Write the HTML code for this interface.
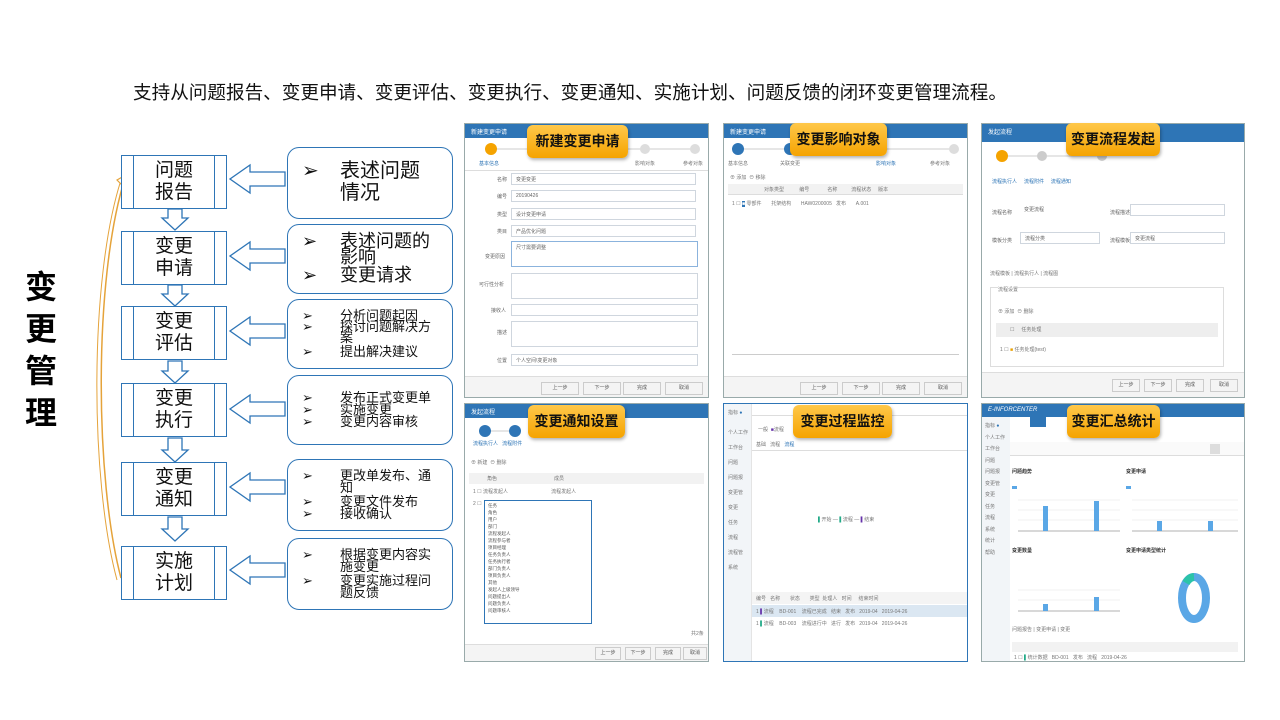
<!DOCTYPE html><html><head><meta charset="utf-8"><style>
*{margin:0;padding:0;box-sizing:border-box}
body{width:1280px;height:720px;background:#fff;position:relative;overflow:hidden;font-family:"Liberation Sans","Noto Sans CJK SC",sans-serif}
.a{position:absolute}
.title{left:133px;top:78px;font-size:18.6px;color:#111;white-space:nowrap}
.big{left:20px;top:266px;width:42px;font-size:32px;font-weight:bold;line-height:42px;text-align:center;color:#000}
.step{position:absolute;left:121px;width:106px;height:54px;border:1.5px solid #2e75b6;background:#fff;font-size:19px;line-height:22px;text-align:center;padding-top:4px;color:#111}
.step:before,.step:after{content:"";position:absolute;top:0;bottom:0;width:0;border-left:1.5px solid #2e75b6}
.step:before{left:11px}.step:after{right:11px}
.box{position:absolute;left:287px;width:166px;border:1.5px solid #2e75b6;border-radius:12px;background:#fff;color:#111}
.box .li{position:relative;padding-left:52px}
.box .li:before{content:"➢";position:absolute;left:14px;top:0}
.panel{position:absolute;border:1px solid #9aa;background:#fff;overflow:hidden}
.hd{height:14px;background:#2e75b6;color:#fff;font-size:6px;padding:3px 6px}
.lab{position:absolute;background:linear-gradient(#ffc84a,#f5a300);border-radius:6px;font-size:14px;font-weight:bold;color:#111;text-align:center;line-height:33px;height:33px;box-shadow:1px 2px 3px rgba(0,0,0,.3)}
.f{position:absolute;border:1px solid #cfd6de;height:12px;font-size:5px;color:#666;padding:2px 4px}
.fl{position:absolute;font-size:5px;color:#666}
.btn{position:absolute;border:1px solid #ccc;height:13px;width:38px;font-size:5px;color:#555;text-align:center;line-height:11px}
.g{position:absolute;font-size:5px;color:#777;white-space:nowrap}
</style></head><body>
<div class="a title">支持从问题报告、变更申请、变更评估、变更执行、变更通知、实施计划、问题反馈的闭环变更管理流程。</div>
<div class="a big">变<br>更<br>管<br>理</div>

<svg class="a" style="left:95px;top:150px" width="200" height="460">
<path d="M26,428 C0,330 -2,130 30,28" fill="none" stroke="#e5a33a" stroke-width="1.5"/>
<path d="M22,430 C-5,330 -6,130 26,30" fill="none" stroke="#e5a33a" stroke-width="1"/>
<path d="M22,30 L36,22 L30,38 Z" fill="#fff" stroke="#e5a33a" stroke-width="1.2"/>
<g fill="#fff" stroke="#2e75b6" stroke-width="1.3">
<path d="M73,59 h14 v9 h6 l-13,12 l-13,-12 h6z"/>
<path d="M73,135 h14 v9 h6 l-13,12 l-13,-12 h6z"/>
<path d="M73,211 h14 v10 h6 l-13,12 l-13,-12 h6z"/>
<path d="M73,288 h14 v12 h6 l-13,12 l-13,-12 h6z"/>
<path d="M73,367 h14 v12 h6 l-13,12 l-13,-12 h6z"/>
</g>
<g fill="#fff" stroke="#2e75b6" stroke-width="1.3">
<path d="M190,22 v14 h-35 v7 l-20,-14 l20,-14 v7z"/>
<path d="M190,99 v14 h-35 v7 l-20,-14 l20,-14 v7z"/>
<path d="M190,174 v14 h-35 v7 l-20,-14 l20,-14 v7z"/>
<path d="M190,252 v14 h-35 v7 l-20,-14 l20,-14 v7z"/>
<path d="M190,330 v14 h-35 v7 l-20,-14 l20,-14 v7z"/>
<path d="M190,413 v14 h-35 v7 l-20,-14 l20,-14 v7z"/>
</g></svg>

<div class="step" style="top:155px">问题<br>报告</div>
<div class="step" style="top:231px">变更<br>申请</div>
<div class="step" style="top:306px">变更<br>评估</div>
<div class="step" style="top:383px">变更<br>执行</div>
<div class="step" style="top:462px">变更<br>通知</div>
<div class="step" style="top:546px">实施<br>计划</div>

<div class="box" style="top:147px;height:72px;font-size:20px;line-height:22px;padding-top:12px"><div class="li">表述问题<br>情况</div></div>
<div class="box" style="top:224px;height:70px;font-size:18px;line-height:16px;padding-top:8px"><div class="li">表述问题的<br>影响</div><div class="li" style="margin-top:2px">变更请求</div></div>
<div class="box" style="top:299px;height:70px;font-size:13px;line-height:11px;padding-top:10px"><div class="li">分析问题起因</div><div class="li">探讨问题解决方<br>案</div><div class="li" style="margin-top:3px">提出解决建议</div></div>
<div class="box" style="top:375px;height:70px;font-size:13px;line-height:12px;padding-top:16px"><div class="li">发布正式变更单</div><div class="li">实施变更</div><div class="li">变更内容审核</div></div>
<div class="box" style="top:459px;height:72px;font-size:13px;line-height:12px;padding-top:10px"><div class="li">更改单发布、通<br>知</div><div class="li" style="margin-top:2px">变更文件发布</div><div class="li">接收确认</div></div>
<div class="box" style="top:538px;height:72px;font-size:13px;line-height:12px;padding-top:10px"><div class="li">根据变更内容实<br>施变更</div><div class="li" style="margin-top:2px">变更实施过程问<br>题反馈</div></div>

<!-- panel 1 -->
<div class="panel" style="left:464px;top:123px;width:245px;height:275px">
<div class="hd">新建变更申请</div>
<svg class="a" style="left:0;top:14px" width="245" height="30"><line x1="26" y1="11" x2="230" y2="11" stroke="#ccc"/><circle cx="26" cy="11" r="6" fill="#f5a300"/><circle cx="180" cy="11" r="5" fill="#ddd"/><circle cx="230" cy="11" r="5" fill="#ddd"/></svg>
<div class="g" style="left:14px;top:36px;color:#2e75b6">基本信息</div><div class="g" style="left:170px;top:36px">影响对象</div><div class="g" style="left:218px;top:36px">参考对象</div>
<div style="position:absolute;left:0;right:0;top:46px;border-top:1px solid #ddd"></div>
<div class="fl" style="left:32px;top:52px">名称</div><div class="f" style="left:46px;top:49px;width:185px">变更变更</div>
<div class="fl" style="left:32px;top:69px">编号</div><div class="f" style="left:46px;top:66px;width:185px">20190426</div>
<div class="fl" style="left:32px;top:87px">类型</div><div class="f" style="left:46px;top:84px;width:185px">设计变更申请</div>
<div class="fl" style="left:32px;top:104px">类目</div><div class="f" style="left:46px;top:101px;width:185px">产品优化问题</div>
<div class="fl" style="left:20px;top:129px">变更原因</div><div class="f" style="left:46px;top:117px;width:187px;height:26px;border-color:#8bb3dd">尺寸需要调整</div>
<div class="fl" style="left:14px;top:157px">可行性分析</div><div class="f" style="left:46px;top:149px;width:187px;height:26px"></div>
<div class="fl" style="left:26px;top:183px">接收人</div><div class="f" style="left:46px;top:180px;width:187px"></div>
<div class="fl" style="left:32px;top:205px">描述</div><div class="f" style="left:46px;top:197px;width:187px;height:26px"></div>
<div class="fl" style="left:32px;top:233px">位置</div><div class="f" style="left:46px;top:230px;width:187px">个人空间\变更对象</div>
<div style="position:absolute;left:0;right:0;top:252px;height:23px;background:#f4f4f4;border-top:1px solid #ddd"></div>
<div class="btn" style="left:76px;top:258px">上一步</div><div class="btn" style="left:118px;top:258px">下一步</div><div class="btn" style="left:158px;top:258px">完成</div><div class="btn" style="left:200px;top:258px">取消</div>
</div>
<div class="lab" style="left:527px;top:125px;width:101px">新建变更申请</div>

<!-- panel 2 -->
<div class="panel" style="left:723px;top:123px;width:245px;height:275px">
<div class="hd">新建变更申请</div>
<svg class="a" style="left:0;top:14px" width="245" height="30"><line x1="14" y1="11" x2="230" y2="11" stroke="#ccc"/><circle cx="14" cy="11" r="6" fill="#2e75b6"/><circle cx="66" cy="11" r="6" fill="#2e75b6"/><circle cx="230" cy="11" r="5" fill="#ddd"/></svg>
<div class="g" style="left:4px;top:36px">基本信息</div><div class="g" style="left:56px;top:36px">关联变更</div><div class="g" style="left:152px;top:36px;color:#2e75b6">影响对象</div><div class="g" style="left:206px;top:36px">参考对象</div>
<div class="g" style="left:6px;top:50px">⊕ 添加 &nbsp;⊖ 移除</div>
<div style="position:absolute;left:4px;right:4px;top:60px;height:11px;background:#f2f2f2;border-bottom:1px solid #ddd"></div>
<div class="g" style="left:40px;top:62px">对象类型 &nbsp; &nbsp; &nbsp; &nbsp; &nbsp; 编号 &nbsp; &nbsp; &nbsp; &nbsp; &nbsp; &nbsp; 名称 &nbsp; &nbsp; &nbsp; &nbsp; &nbsp;流程状态 &nbsp; &nbsp; 版本</div>
<div class="g" style="left:8px;top:76px">1 ☐ <span style="background:#2e75b6;color:#fff">■</span> 零部件 &nbsp; &nbsp; &nbsp; 托架结构 &nbsp; &nbsp; &nbsp; HAW0200005 &nbsp; 发布 &nbsp; &nbsp; &nbsp; A.001</div>
<div style="position:absolute;left:8px;right:8px;top:230px;border-top:1px solid #ccc"></div>
<div style="position:absolute;left:0;right:0;top:252px;height:23px;background:#f4f4f4;border-top:1px solid #ddd"></div>
<div class="btn" style="left:76px;top:258px">上一步</div><div class="btn" style="left:118px;top:258px">下一步</div><div class="btn" style="left:158px;top:258px">完成</div><div class="btn" style="left:200px;top:258px">取消</div>
</div>
<div class="lab" style="left:790px;top:123px;width:97px">变更影响对象</div>

<!-- panel 3 -->
<div class="panel" style="left:981px;top:123px;width:264px;height:275px">
<div class="hd" style="height:18px">发起流程</div>
<svg class="a" style="left:0;top:18px" width="264" height="26"><line x1="20" y1="14" x2="120" y2="14" stroke="#ccc"/><circle cx="20" cy="14" r="6" fill="#f5a300"/><circle cx="60" cy="14" r="5" fill="#ccc"/><circle cx="120" cy="14" r="5" fill="#ccc"/></svg>
<div class="g" style="left:10px;top:54px;color:#2e75b6">流程执行人 &nbsp; &nbsp; 流程附件 &nbsp; &nbsp; 流程通知</div>
<div class="fl" style="left:10px;top:85px">流程名称</div><div class="f" style="left:38px;top:80px;width:80px;border:none">变更流程</div><div class="fl" style="left:128px;top:85px">流程描述</div><div class="f" style="left:148px;top:80px;width:95px"></div>
<div class="fl" style="left:10px;top:113px">模板分类</div><div class="f" style="left:38px;top:108px;width:80px">流程分类</div><div class="fl" style="left:128px;top:113px">流程模板</div><div class="f" style="left:148px;top:108px;width:95px">变更流程</div>
<div class="g" style="left:8px;top:146px">流程模板 | 流程执行人 | 流程图</div>
<div style="position:absolute;left:8px;right:20px;top:163px;height:80px;border:1px solid #ddd"></div>
<div class="g" style="left:16px;top:162px;background:#fff">流程设置</div>
<div class="g" style="left:16px;top:184px">⊕ 添加 &nbsp;⊖ 删除</div>
<div style="position:absolute;left:14px;right:26px;top:199px;height:14px;background:#eee"></div>
<div class="g" style="left:28px;top:202px">☐ &nbsp; &nbsp; 任务处理</div>
<div class="g" style="left:18px;top:222px">1 ☐ <span style="color:#e9a000">■</span> 任务处理(test)</div>
<div style="position:absolute;left:0;right:0;top:248px;height:27px;background:#f4f4f4;border-top:1px solid #ddd"></div>
<div class="btn" style="left:130px;top:255px;width:28px">上一步</div><div class="btn" style="left:162px;top:255px;width:28px">下一步</div><div class="btn" style="left:194px;top:255px;width:28px">完成</div><div class="btn" style="left:228px;top:255px;width:28px">取消</div>
</div>
<div class="lab" style="left:1066px;top:123px;width:94px">变更流程发起</div>

<!-- panel 4 -->
<div class="panel" style="left:464px;top:403px;width:245px;height:259px">
<div class="hd">发起流程</div>
<svg class="a" style="left:0;top:14px" width="245" height="26"><line x1="20" y1="13" x2="50" y2="13" stroke="#ccc"/><circle cx="20" cy="13" r="6" fill="#2e75b6"/><circle cx="50" cy="13" r="6" fill="#2e75b6"/></svg>
<div class="g" style="left:8px;top:36px;color:#2e75b6">流程执行人 &nbsp; 流程附件</div>
<div class="g" style="left:6px;top:55px">⊕ 新建 &nbsp;⊖ 删除</div>
<div style="position:absolute;left:4px;right:4px;top:69px;height:11px;background:#f2f2f2"></div>
<div class="g" style="left:22px;top:71px">角色 &nbsp; &nbsp; &nbsp; &nbsp; &nbsp; &nbsp; &nbsp; &nbsp; &nbsp; &nbsp; &nbsp; &nbsp; &nbsp; &nbsp; &nbsp; &nbsp; &nbsp; &nbsp; &nbsp; &nbsp; 成员</div>
<div class="g" style="left:8px;top:84px">1 ☐ 流程发起人 &nbsp; &nbsp; &nbsp; &nbsp; &nbsp; &nbsp; &nbsp; &nbsp; &nbsp; &nbsp; &nbsp; &nbsp; &nbsp; &nbsp; &nbsp; 流程发起人</div>
<div class="g" style="left:8px;top:97px">2 ☐</div>
<div style="position:absolute;left:19px;top:96px;width:108px;height:124px;border:1px solid #2e75b6;background:#fff;font-size:4.5px;line-height:7px;color:#555;padding:1px 3px">任务<br>角色<br>用户<br>部门<br>流程发起人<br>流程参与者<br>项目经理<br>任务负责人<br>任务执行者<br>部门负责人<br>项目负责人<br>其他<br>发起人上级领导<br>问题提出人<br>问题负责人<br>问题审核人</div>
<div class="g" style="left:226px;top:226px">共2条</div>
<div style="position:absolute;left:0;right:0;top:240px;height:19px;background:#f4f4f4;border-top:1px solid #ddd"></div>
<div class="btn" style="left:130px;top:243px;width:26px">上一步</div><div class="btn" style="left:160px;top:243px;width:26px">下一步</div><div class="btn" style="left:190px;top:243px;width:26px">完成</div><div class="btn" style="left:218px;top:243px;width:24px">取消</div>
</div>
<div class="lab" style="left:528px;top:405px;width:97px">变更通知设置</div>

<!-- panel 5 -->
<div class="panel" style="left:723px;top:403px;width:245px;height:259px;border-color:#2e75b6">
<div style="position:absolute;left:0;top:0;width:28px;bottom:0;background:#f2f5f8;border-right:1px solid #e4e4e4"></div>
<div class="g" style="left:4px;top:5px">指标 <span style="color:#2e75b6">●</span></div>
<div class="g" style="left:4px;top:22px;line-height:15px">个人工作<br>工作台<br>问题<br>问题报<br>变更管<br>变更<br>任务<br>流程<br>流程管<br>系统</div>
<div style="position:absolute;left:28px;right:0;top:0;height:12px;border-bottom:1px solid #ddd"></div>
<div class="g" style="left:34px;top:22px">一般 &nbsp;<span style="color:#63a">■</span>流程</div>
<div class="g" style="left:32px;top:37px">基础 &nbsp; 流程 &nbsp; <span style="color:#2e75b6">流程</span></div>
<div style="position:absolute;left:28px;right:0;top:46px;border-top:1px solid #ddd"></div>
<div class="g" style="left:94px;top:112px"><span style="color:#2a8">▌</span>开始 — <span style="color:#2a8">▌</span>流程 — <span style="color:#63a">▌</span>结束</div>
<div style="position:absolute;left:28px;right:0;top:188px;height:12px;background:#f4f4f4"></div>
<div class="g" style="left:32px;top:191px">编号 &nbsp; 名称 &nbsp; &nbsp; &nbsp; 状态 &nbsp; &nbsp; &nbsp; 类型 &nbsp;处理人 &nbsp; 时间 &nbsp; &nbsp; 结束时间</div>
<div style="position:absolute;left:28px;right:0;top:201px;height:12px;background:#dbe7f2"></div>
<div class="g" style="left:32px;top:204px">1 <span style="color:#63a">▌</span>流程 &nbsp; &nbsp;BD-001 &nbsp; &nbsp;流程已完成 &nbsp; 结束 &nbsp; 发布 &nbsp; 2019-04 &nbsp; 2019-04-26</div>
<div class="g" style="left:32px;top:216px">1 <span style="color:#2a8">▌</span>流程 &nbsp; &nbsp;BD-003 &nbsp; &nbsp;流程进行中 &nbsp; 进行 &nbsp; 发布 &nbsp; 2019-04 &nbsp; 2019-04-26</div>
</div>
<div class="lab" style="left:793px;top:405px;width:99px">变更过程监控</div>

<!-- panel 6 -->
<div class="panel" style="left:981px;top:403px;width:264px;height:259px">
<div class="hd" style="height:13px;font-style:italic">E-INFORCENTER</div>
<div style="position:absolute;left:0;top:13px;width:28px;bottom:0;background:#f2f5f8"></div>
<div class="g" style="left:3px;top:17px;line-height:11.5px">指标 <span style="color:#2e75b6">●</span><br>个人工作<br>工作台<br>问题<br>问题报<br>变更管<br>变更<br>任务<br>流程<br>系统<br>统计<br>帮助</div>
<div style="position:absolute;left:48px;top:13px;width:16px;height:10px;background:#2e75b6"></div>
<div style="position:absolute;left:28px;right:0;top:38px;height:14px;border-bottom:1px solid #ddd;background:#fafafa"></div>
<div style="position:absolute;left:228px;top:40px;width:10px;height:10px;background:#ddd"></div>
<div class="g" style="left:30px;top:64px;color:#333;font-weight:bold">问题趋势</div>
<div class="g" style="left:144px;top:64px;color:#333;font-weight:bold">变更申请</div>
<svg class="a" style="left:28px;top:80px" width="236" height="180">
<rect x="2" y="2" width="5" height="3" fill="#5aa7e6"/><rect x="116" y="2" width="5" height="3" fill="#5aa7e6"/>
<g stroke="#e3e3e3" stroke-width=".5"><line x1="8" y1="16" x2="110" y2="16"/><line x1="8" y1="26" x2="110" y2="26"/><line x1="8" y1="36" x2="110" y2="36"/><line x1="122" y1="16" x2="228" y2="16"/><line x1="122" y1="26" x2="228" y2="26"/><line x1="122" y1="36" x2="228" y2="36"/><line x1="8" y1="106" x2="110" y2="106"/><line x1="8" y1="116" x2="110" y2="116"/></g>
<g stroke="#666" stroke-width=".6"><line x1="8" y1="47" x2="110" y2="47"/><line x1="122" y1="47" x2="228" y2="47"/><line x1="8" y1="127" x2="110" y2="127"/></g>
<rect x="33" y="22" width="5" height="25" fill="#5aa7e6"/><rect x="84" y="17" width="5" height="30" fill="#5aa7e6"/>
<rect x="147" y="37" width="5" height="10" fill="#5aa7e6"/><rect x="198" y="37" width="5" height="10" fill="#5aa7e6"/>
<rect x="33" y="120" width="5" height="7" fill="#5aa7e6"/><rect x="84" y="113" width="5" height="14" fill="#5aa7e6"/>
<ellipse cx="184" cy="114" rx="12" ry="21" fill="none" stroke="#5aa7e6" stroke-width="8"/>
<path d="M176,99 A12,21 0 0 1 184,93" fill="none" stroke="#2bc4a8" stroke-width="8"/>
</svg>
<div class="g" style="left:30px;top:143px;color:#333;font-weight:bold">变更数量</div>
<div class="g" style="left:144px;top:143px;color:#333;font-weight:bold">变更申请类型统计</div>
<div class="g" style="left:30px;top:222px">问题报告 | 变更申请 | 变更</div>
<div style="position:absolute;left:30px;right:6px;top:238px;height:10px;background:#f2f2f2"></div>
<div class="g" style="left:32px;top:250px">1 ☐ <span style="color:#2a8">▌</span>统计数据 &nbsp; BD-001 &nbsp; 发布 &nbsp; 流程 &nbsp; 2019-04-26</div>
</div>
<div class="lab" style="left:1067px;top:405px;width:93px">变更汇总统计</div>
</body></html>
